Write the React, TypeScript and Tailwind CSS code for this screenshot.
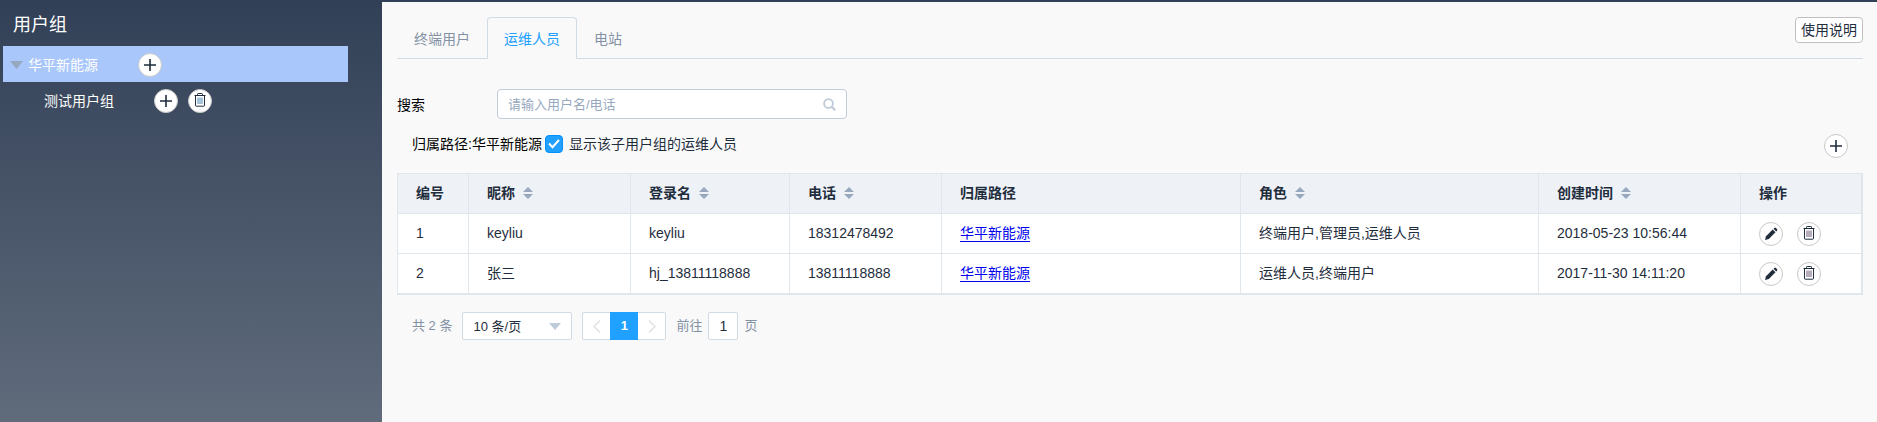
import { useState } from "react";
import type { ReactNode } from "react";

function PlusIcon() {
  return (
    <svg width="14" height="14" viewBox="0 0 14 14" aria-hidden="true">
      <path d="M7 1v12M1 7h12" stroke="#1f2d3d" strokeWidth="1.6" fill="none" />
    </svg>
  );
}

function TrashIcon({ bars = "#6b5a78" }: { bars?: string }) {
  return (
    <svg width="12" height="14" viewBox="0 0 12 14" fill="none" stroke="#1f2d3d" className="mb-[2px]" aria-hidden="true">
      <path d="M0.5 2.500h11" strokeWidth="1" />
      <path d="M3.500 2.500V1.200q0-.7.7-.7h3.600q.7 0 .7.7v1.300" strokeWidth="1" />
      <path d="M1.500 3v9.500q0 .7.700.7h7.600q.7 0 .7-.7V3" strokeWidth="1" />
      <path d="M4 4.500v6.500M6 4.500v6.500M8 4.500v6.500" stroke={bars} strokeWidth="1" />
    </svg>
  );
}

function PencilIcon() {
  return (
    <svg width="14" height="14" viewBox="0 0 14 14" fill="#1f2d3d" className="mb-px" aria-hidden="true">
      <path d="M1 13l1-3.8L8.700 2.500l2.800 2.800L4.800 12z" />
      <path d="M9.500 1.800l.7-.7c.6-.6 1.300-.6 1.900 0l.8.8c.6.6.6 1.300 0 1.900l-.7.7z" />
    </svg>
  );
}

function CircleButton({ label, children }: { label: string; children: ReactNode }) {
  return (
    <button
      type="button"
      aria-label={label}
      className="flex size-6 shrink-0 items-center justify-center rounded-full border border-[#c8c8c8] bg-white"
    >
      {children}
    </button>
  );
}

function SortIcon() {
  return (
    <svg width="10" height="12" viewBox="0 0 10 12" fill="#97a8be" aria-hidden="true">
      <path d="M5 0l5 5H0z" />
      <path d="M5 12l5-5H0z" />
    </svg>
  );
}

function Sidebar() {
  return (
    <aside className="w-[382px] shrink-0 pt-2 pl-[3px] text-white">
      <h1 className="pb-1.5 pl-[10px] text-[18px] leading-[30px]">用户组</h1>
      <ul>
        <li>
          <div className="flex h-9 w-[345px] items-center bg-[#a9c7fa] pt-[2px] pl-[7px]">
            <svg width="13" height="8" viewBox="0 0 13 8" fill="#97a8be" aria-hidden="true">
              <path d="M0 0h13L6.500 8z" />
            </svg>
            <span className="ml-[5px]">华平新能源</span>
            <span className="ml-10 flex">
              <CircleButton label="添加子用户组">
                <PlusIcon />
              </CircleButton>
            </span>
          </div>
          <ul>
            <li className="flex h-9 w-[345px] items-center pt-[2px] pl-[41px]">
              <span>测试用户组</span>
              <span className="ml-10 flex gap-[10px]">
                <CircleButton label="添加子用户组">
                  <PlusIcon />
                </CircleButton>
                <CircleButton label="删除用户组">
                  <TrashIcon bars="#4f86b8" />
                </CircleButton>
              </span>
            </li>
          </ul>
        </li>
      </ul>
    </aside>
  );
}

const tabs = ["终端用户", "运维人员", "电站"];

function Tabs() {
  const [active, setActive] = useState(1);
  return (
    <div className="flex items-start justify-between shadow-[inset_0_-1px_0_#d1dbe5]">
      <div role="tablist" className="flex">
        {tabs.map((tab, i) => (
          <button
            key={tab}
            type="button"
            role="tab"
            aria-selected={i === active}
            onClick={() => setActive(i)}
            className={
              i === active
                ? "h-[42px] rounded-t border border-[#d1dbe5] border-b-[#f9f9f9] px-4 pt-px text-[#20a0ff]"
                : "h-[42px] border border-transparent px-4 pt-px text-[#8391a5]"
            }
          >
            {tab}
          </button>
        ))}
      </div>
      <button
        type="button"
        className="flex h-[26px] items-center rounded border border-[#c0c0c0] bg-white px-[5px] text-[#1f2d3d]"
      >
        使用说明
      </button>
    </div>
  );
}

const columns = [
  { title: "编号", sortable: false, width: "w-[71px]" },
  { title: "昵称", sortable: true, width: "w-[162px]" },
  { title: "登录名", sortable: true, width: "w-[159px]" },
  { title: "电话", sortable: true, width: "w-[152px]" },
  { title: "归属路径", sortable: false, width: "w-[299px]" },
  { title: "角色", sortable: true, width: "w-[298px]" },
  { title: "创建时间", sortable: true, width: "w-[202px]" },
  { title: "操作", sortable: false, width: "w-[120px]" },
];

const users = [
  { id: 1, nick: "keyliu", login: "keyliu", phone: "18312478492", path: "华平新能源", roles: "终端用户,管理员,运维人员", created: "2018-05-23 10:56:44" },
  { id: 2, nick: "张三", login: "hj_13811118888", phone: "13811118888", path: "华平新能源", roles: "运维人员,终端用户", created: "2017-11-30 14:11:20" },
];

const cell = "h-10 border-r border-b border-[#dfe6ec] px-[18px] pt-0 pb-[2px] last:border-r-0";

function UserTable() {
  return (
    <div className="overflow-x-auto border-t border-r-2 border-b border-l border-[#dfe6ec]">
      <table className="w-full table-fixed border-separate border-spacing-0 text-left text-[#1f2d3d]">
        <thead className="bg-[#eef1f6]">
          <tr>
            {columns.map((c) => (
              <th key={c.title} scope="col" className={`${cell} ${c.width} font-bold`}>
                <span className="flex items-center gap-2">
                  {c.title}
                  {c.sortable && (
                    <button type="button" aria-label={`按${c.title}排序`}>
                      <SortIcon />
                    </button>
                  )}
                </span>
              </th>
            ))}
          </tr>
        </thead>
        <tbody className="bg-white">
          {users.map((u) => (
            <tr key={u.id}>
              <td className={cell}>{u.id}</td>
              <td className={cell}>{u.nick}</td>
              <td className={cell}>{u.login}</td>
              <td className={cell}>{u.phone}</td>
              <td className={cell}>
                <a href="#path" className="text-[#0000ee] underline decoration-1 underline-offset-[3px]">
                  {u.path}
                </a>
              </td>
              <td className={cell}>{u.roles}</td>
              <td className={cell}>{u.created}</td>
              <td className={cell}>
                <div className="flex gap-[14px] pt-[3px]">
                  <CircleButton label="编辑">
                    <PencilIcon />
                  </CircleButton>
                  <CircleButton label="删除">
                    <TrashIcon />
                  </CircleButton>
                </div>
              </td>
            </tr>
          ))}
        </tbody>
      </table>
    </div>
  );
}

function Pagination() {
  return (
    <nav aria-label="分页" className="flex h-7 items-center pl-[15px] text-[13px] text-[#8391a5]">
      <span>共 2 条</span>
      <div className="relative ml-[10px]">
        <select
          aria-label="每页条数"
          className="h-7 w-[110px] appearance-none rounded-xs border border-[#d1dbe5] bg-white pt-px pl-[10px] text-[#1f2d3d]"
        >
          <option>10 条/页</option>
          <option>20 条/页</option>
        </select>
        <svg
          className="pointer-events-none absolute top-[11px] right-[11px]"
          width="12"
          height="7"
          viewBox="0 0 12 7"
          fill="#bfcbd9"
          aria-hidden="true"
        >
          <path d="M0 0h12L6 7z" />
        </svg>
      </div>
      <div className="ml-[10px] flex">
        <button
          type="button"
          aria-label="上一页"
          className="flex h-7 w-7 items-center justify-center rounded-l-xs border border-r-0 border-[#d1dbe5] bg-white"
        >
          <svg width="8" height="13" viewBox="0 0 8 13" fill="none" stroke="#e0e0e0" strokeWidth="1.4" aria-hidden="true">
            <path d="M7 0.500L1 6.500l6 6" />
          </svg>
        </button>
        <button type="button" aria-current="page" className="h-7 w-7 bg-[#20a0ff] font-bold text-white">
          1
        </button>
        <button
          type="button"
          aria-label="下一页"
          className="flex h-7 w-7 items-center justify-center rounded-r-xs border border-l-0 border-[#d1dbe5] bg-white"
        >
          <svg width="8" height="13" viewBox="0 0 8 13" fill="none" stroke="#e0e0e0" strokeWidth="1.4" aria-hidden="true">
            <path d="M1 0.500l6 6-6 6" />
          </svg>
        </button>
      </div>
      <label className="ml-[10px] flex items-center gap-[6px]">
        前往
        <input
          type="text"
          defaultValue="1"
          className="h-7 w-[30px] rounded-xs border border-[#d1dbe5] bg-white text-center text-[14px] text-[#1f2d3d]"
        />
        页
      </label>
    </nav>
  );
}

export default function App() {
  return (
    <div className="flex min-h-screen bg-linear-to-b from-[#324057] to-[#606c7c] pt-[2px] font-['Liberation_Sans','Noto_Sans_CJK_SC',sans-serif] text-[14px] leading-5">
      <Sidebar />
      <main className="min-w-0 flex-1 bg-[#f9f9f9] pt-[15px] pr-[14px] pl-[15px]">
        <Tabs />
        <div className="mt-[30px] flex items-center">
          <label htmlFor="search" className="w-[100px] pt-[2px] text-black">
            搜索
          </label>
          <div className="relative w-[350px]">
            <input
              id="search"
              type="text"
              placeholder="请输入用户名/电话"
              className="block h-[30px] w-full rounded border border-[#bfcbd9] bg-white pr-9 pl-[10px] text-[13px] text-[#1f2d3d] placeholder:text-[#97a8be]"
            />
            <svg
              className="pointer-events-none absolute top-[9px] right-[11px]"
              width="13"
              height="13"
              viewBox="0 0 13 13"
              fill="none"
              stroke="#bfcbd9"
              strokeWidth="1.8"
              aria-hidden="true"
            >
              <circle cx="5.500" cy="5.500" r="4.400" />
              <path d="M8.700 8.700l3.500 3.500" strokeWidth="2.200" />
            </svg>
          </div>
        </div>
        <div className="mt-[15px] flex h-6 items-start justify-between pr-[15px] pl-[15px]">
          <div className="flex items-center">
            <span className="text-black">归属路径:华平新能源</span>
            <label className="ml-[3px] flex items-center gap-[6px] text-[#1f2d3d]">
              <span className="relative flex">
                <input
                  type="checkbox"
                  defaultChecked
                  className="peer size-[18px] appearance-none rounded border border-[#bfcbd9] bg-white checked:border-[#0190fe] checked:bg-[#20a0ff]"
                />
                <svg
                  className="pointer-events-none absolute top-[4px] left-[3px] hidden peer-checked:block"
                  width="12"
                  height="10"
                  viewBox="0 0 12 10"
                  fill="none"
                  stroke="#fff"
                  strokeWidth="2"
                  aria-hidden="true"
                >
                  <path d="M1 4.500l3.500 3.700L11 1" />
                </svg>
              </span>
              显示该子用户组的运维人员
            </label>
          </div>
          <CircleButton label="添加运维人员">
            <PlusIcon />
          </CircleButton>
        </div>
        <div className="mt-[15px]">
          <UserTable />
        </div>
        <div className="mt-[17px]">
          <Pagination />
        </div>
      </main>
    </div>
  );
}
